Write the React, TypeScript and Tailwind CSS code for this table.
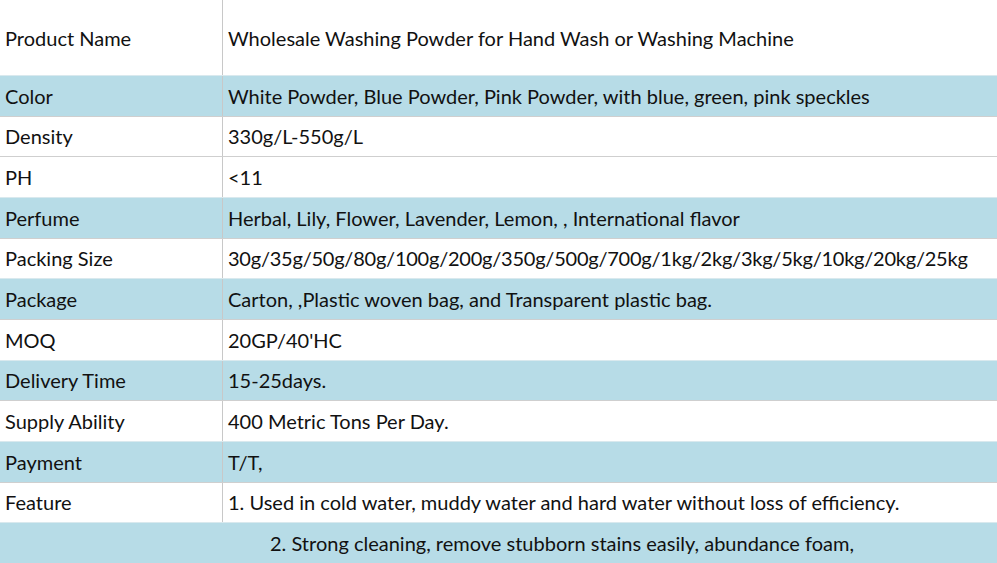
import React from "react";

const rows: { label: string; value: string; blue: boolean; tight?: boolean }[] = [
  { label: "Color", value: "White Powder, Blue Powder, Pink Powder, with blue, green, pink speckles", blue: true },
  { label: "Density", value: "330g/L-550g/L", blue: false },
  { label: "PH", value: "<11", blue: false },
  { label: "Perfume", value: "Herbal, Lily, Flower, Lavender, Lemon, , International flavor", blue: true },
  { label: "Packing Size", value: "30g/35g/50g/80g/100g/200g/350g/500g/700g/1kg/2kg/3kg/5kg/10kg/20kg/25kg", blue: false, tight: true },
  { label: "Package", value: "Carton, ,Plastic woven bag, and Transparent plastic bag.", blue: true },
  { label: "MOQ", value: "20GP/40'HC", blue: false },
  { label: "Delivery Time", value: "15-25days.", blue: true },
  { label: "Supply Ability", value: "400 Metric Tons Per Day.", blue: false },
  { label: "Payment", value: "T/T,", blue: true },
  { label: "Feature", value: "1. Used in cold water, muddy water and hard water without loss of efficiency.", blue: false },
];

export default function App() {
  return (
    <div
      className="w-[997px] h-[563px] overflow-hidden bg-white text-[#111] text-[20px] leading-none"
      style={{ fontFamily: "Lato, 'Open Sans', sans-serif" }}
    >
      <div className="flex h-[75px] bg-white">
        <div className="w-[223px] shrink-0 border-r border-[#c8c8c8] flex items-center pl-[5px]">Product Name</div>
        <div className="flex-1 flex items-center pl-[5px]">Wholesale Washing Powder for Hand Wash or Washing Machine</div>
      </div>
      {rows.map((r) => (
        <div
          key={r.label}
          className={`flex h-[40.67px] border-t ${r.blue ? "bg-[#b7dce7] border-[#d9e9ee]" : "bg-white border-[#cfcfcf]"}`}
        >
          <div className="w-[223px] shrink-0 border-r border-[#c8c8c8] flex items-center pl-[5px]">{r.label}</div>
          <div className={`flex-1 flex items-center pl-[5px] whitespace-nowrap ${r.tight ? "tracking-[-0.23px]" : ""}`}>
            {r.value}
          </div>
        </div>
      ))}
      <div className="flex h-[40.67px] border-t border-[#d9e9ee] bg-[#b7dce7] items-center pl-[270px] whitespace-nowrap">
        2. Strong cleaning, remove stubborn stains easily, abundance foam,
      </div>
    </div>
  );
}
